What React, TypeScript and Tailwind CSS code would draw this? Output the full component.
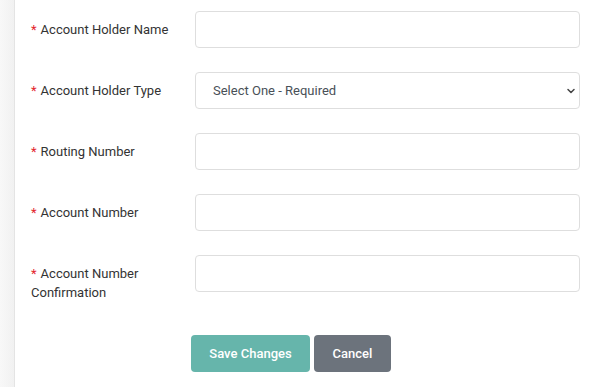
import { ChevronDown } from "lucide-react";

const fields = [
  { label: "Account Holder Name", type: "text" },
  { label: "Account Holder Type", type: "select" },
  { label: "Routing Number", type: "text" },
  { label: "Account Number", type: "text" },
  { label: "Account Number Confirmation", type: "text" },
];

export default function App() {
  return (
    <div className="flex h-[387px] w-[603px] bg-white overflow-hidden font-['Roboto',sans-serif]">
      <div className="w-[15px] shrink-0 bg-gradient-to-r from-[#f8f8f8] to-[#f1f1f1] border-r border-[#e4e4e4]" />
      <div className="flex-1 pl-[16px] pr-[23px] pt-[11px]">
        <div className="flex flex-col gap-[24px]">
          {fields.map((f) => (
            <div key={f.label} className="flex items-start h-[37px]">
              <label className="w-[164px] shrink-0 pt-[9px] pr-[20px] text-[13px] leading-[19px] text-[#333]">
                <span className="text-[#e3262d] mr-[4px]">*</span>
                {f.label}
              </label>
              {f.type === "select" ? (
                <div className="relative flex-1">
                  <select className="appearance-none w-full h-[37px] rounded-[4px] border border-[#dedede] bg-white pl-[17px] text-[13px] text-[#495057] outline-none">
                    <option>Select One - Required</option>
                  </select>
                  <ChevronDown
                    size={12}
                    strokeWidth={3}
                    className="absolute right-[3px] top-[13px] text-[#444] pointer-events-none"
                  />
                </div>
              ) : (
                <input
                  type="text"
                  className="flex-1 h-[37px] rounded-[4px] border border-[#dedede] bg-white px-3 text-[13px] outline-none"
                />
              )}
            </div>
          ))}
        </div>
        <div className="flex gap-[4px] mt-[43px] ml-[160px]">
          <button className="w-[119px] h-[37px] rounded-[4px] bg-[#66b5ab] text-white text-[13px] font-medium">
            Save Changes
          </button>
          <button className="w-[77px] h-[37px] rounded-[4px] bg-[#6c737c] text-white text-[13px] font-medium">
            Cancel
          </button>
        </div>
      </div>
    </div>
  );
}
